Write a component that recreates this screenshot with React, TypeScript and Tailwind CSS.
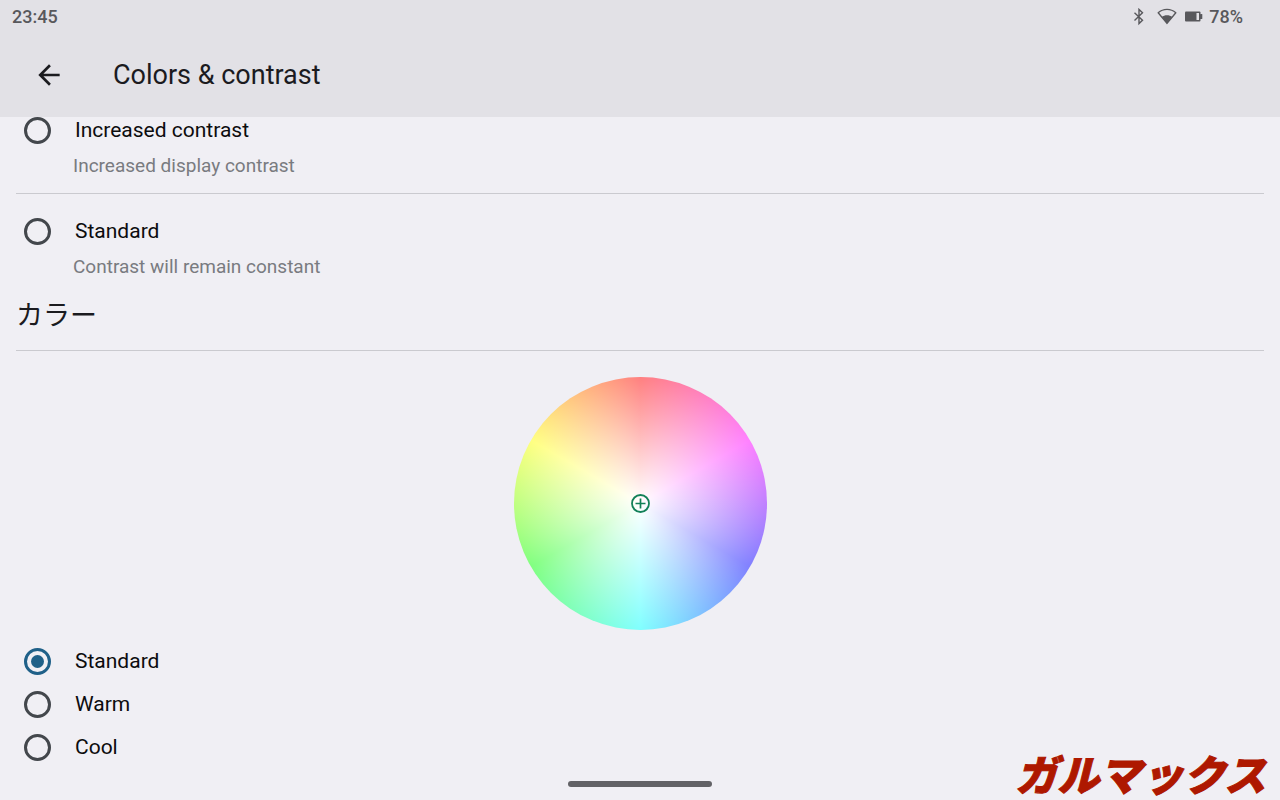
import React, { useState } from "react";

type Option = { id: string; label: string; hint?: string };

const contrastOptions: Option[] = [
  { id: "increased", label: "Increased contrast", hint: "Increased display contrast" },
  { id: "standard", label: "Standard", hint: "Contrast will remain constant" },
];

const colorOptions: Option[] = [
  { id: "standard", label: "Standard" },
  { id: "warm", label: "Warm" },
  { id: "cool", label: "Cool" },
];

function RadioRow({
  group,
  option,
  checked,
  onSelect,
}: {
  group: string;
  option: Option;
  checked: boolean;
  onSelect: (id: string) => void;
}) {
  const inputId = `${group}-${option.id}`;
  return (
    <div className="flex h-[27px] items-center gap-6 pl-2">
      <input
        type="radio"
        id={inputId}
        name={group}
        checked={checked}
        onChange={() => onSelect(option.id)}
        className="grid size-[27px] shrink-0 appearance-none place-content-center rounded-full border-[3px] border-[#43474c] before:size-[13px] before:rounded-full before:content-[''] checked:border-[#1f6088] checked:before:bg-[#1f6088]"
      />
      <label htmlFor={inputId} className="text-[21px] leading-[29px] text-[#0c0c0e]">
        {option.label}
      </label>
    </div>
  );
}

function StatusBar() {
  return (
    <div className="flex h-[34px] items-center justify-between pr-[37px] pl-3 text-[18px] leading-6 font-medium text-[#58585c]">
      <time>23:45</time>
      <div className="flex items-center">
        <svg viewBox="0 0 12 18" className="mr-3 h-[18px] w-3" fill="none" stroke="currentColor" strokeWidth="1.4" aria-label="Bluetooth">
          <path d="M1.5 4.7 9.500 12.300 6 15.600V1.400L9.500 4.700 1.5 12.500" />
        </svg>
        <svg viewBox="0 0 20 18" className="mr-2 h-[18px] w-5" aria-label="Wi-Fi">
          <path d="M1.2 4.800C6.2 .2 13.8 .2 18.8 4.800L10 15.4Z" fill="none" stroke="currentColor" strokeWidth="1.4" strokeLinejoin="round" />
          <path d="M4.600 9c3.200-2.200 7.600-2.200 10.800 0L10 15.400Z" fill="currentColor" />
        </svg>
        <svg viewBox="0 0 18 12" className="mr-1.5 h-3 w-[18px]" aria-label="Battery">
          <rect x="0" y="0.500" width="15.500" height="10" rx="1" fill="currentColor" />
          <rect x="11.500" y="2" width="2.500" height="7" fill="#e2e1e6" />
          <rect x="15" y="3" width="2.300" height="5" rx="0.600" fill="currentColor" />
        </svg>
        <span>78%</span>
      </div>
    </div>
  );
}

function ColorWheel() {
  return (
    <div
      role="img"
      aria-label="Color wheel"
      className="grid size-[253px] place-items-center rounded-full bg-[radial-gradient(closest-side,rgba(255,255,255,1),rgba(255,255,255,0.5)),conic-gradient(#f00,#f0f,#00f,#0ff,#0f0,#ff0,#f00)]"
    >
      <svg viewBox="0 0 19 19" className="size-[19px]" fill="none" stroke="#128058">
        <circle cx="9.500" cy="9.500" r="8.500" strokeWidth="1.800" />
        <path d="M4.500 9.500h10M9.500 4.500v10" strokeWidth="1.700" />
      </svg>
    </div>
  );
}

export default function App() {
  const [contrast, setContrast] = useState("");
  const [color, setColor] = useState("standard");

  return (
    <div className="relative flex min-h-screen flex-col bg-[#f0eff4] font-['Roboto','Noto_Sans_CJK_JP',sans-serif]">
      <header className="bg-[#e2e1e6] pb-0.5">
        <StatusBar />
        <div className="flex h-[81px] items-center gap-12 pl-[33px]">
          <button type="button" aria-label="Back" className="grid size-8 place-items-center text-[#1b1b1f]">
            <svg viewBox="0 0 24 24" className="size-8" fill="currentColor">
              <path d="M20 11H7.830l5.590-5.590L12 4l-8 8 8 8 1.410-1.410L7.830 13H20v-2z" />
            </svg>
          </button>
          <h1 className="text-[27px] leading-8 text-[#1b1b1f]">Colors &amp; contrast</h1>
        </div>
      </header>

      <main className="px-4">
        <fieldset aria-label="Contrast">
          {contrastOptions.map((option, index) => (
            <div key={option.id} className={index > 0 ? "border-t border-[#cacacf] pt-6" : "pb-[15px]"}>
              <RadioRow group="contrast" option={option} checked={contrast === option.id} onSelect={setContrast} />
              <p className="mt-2.5 pl-[57px] text-[19px] leading-6 text-[#797b80]">{option.hint}</p>
            </div>
          ))}
        </fieldset>

        <h2 className="mt-[19px] border-b border-[#cacacf] pb-4 text-[27px] leading-9 text-[#1b1b1f]">カラー</h2>

        <div className="flex justify-center pt-[26px] pb-[18px]">
          <ColorWheel />
        </div>

        <fieldset aria-label="カラー" className="flex flex-col gap-4">
          {colorOptions.map((option) => (
            <RadioRow key={option.id} group="color" option={option} checked={color === option.id} onSelect={setColor} />
          ))}
        </fieldset>
      </main>

      <div className="mt-auto flex justify-center pb-[13px]">
        <div className="h-[6px] w-36 rounded-full bg-[#626266]" />
      </div>

      <div className="absolute right-0 bottom-0 px-3.5 font-['Noto_Sans_CJK_JP',sans-serif] text-[42px] leading-[54px] font-black text-[#ae1800] italic [-webkit-text-stroke:1px_#ae1800]">
        ガルマックス
      </div>
    </div>
  );
}
